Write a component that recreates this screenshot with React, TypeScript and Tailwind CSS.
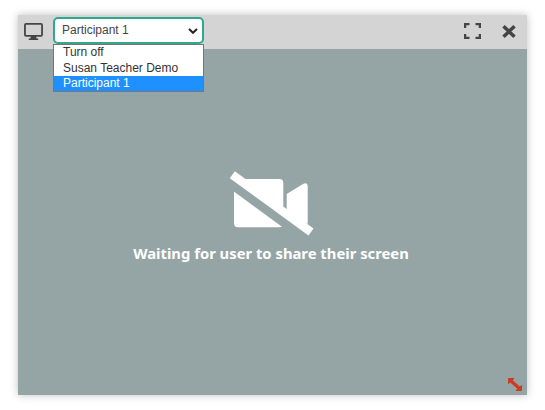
export default function App() {
  return (
    <div className="h-[410px] w-[545px] overflow-hidden bg-white pl-[18px] pt-[15px] font-['Liberation_Sans',Arial,sans-serif]">
      <div className="flex h-[380px] w-[509px] flex-col bg-[#95a5a6] shadow-[0_0_8px_rgba(0,0,0,0.25)]">
        <div className="relative flex h-[34px] shrink-0 items-center bg-[#d4d4d4] pl-[6px] pr-[11px]">
          <svg width="19" height="17" viewBox="0 0 20 18" className="-mt-[2px] mr-[10px] shrink-0 text-[#444]">
            <path fill="currentColor" fillRule="evenodd" d="M2 0h16a2 2 0 0 1 2 2v10.500a2 2 0 0 1-2 2h-5.200l.5 1.800H15v1.700H5v-1.700h1.700l.5-1.800H2a2 2 0 0 1-2-2V2a2 2 0 0 1 2-2Zm-.100 1.900v10.700h16.200V1.900H1.900Z" />
          </svg>
          <div className="relative -mt-[4px]">
            <select
              defaultValue="Participant 1"
              className="block h-[27px] w-[151px] appearance-none rounded-[5px] border-2 border-[#2fa98c] bg-white pl-[7px] pr-[2px] text-[12px] text-[#444]"
            >
              <option>Turn off</option>
              <option>Susan Teacher Demo</option>
              <option>Participant 1</option>
            </select>
            <svg width="10" height="6" viewBox="0 0 10 6" fill="none" stroke="#222" strokeWidth="2" className="pointer-events-none absolute left-[135px] top-[11px]">
              <path d="M1 1L5 4.800L9 1" />
            </svg>
            <div className="absolute left-0 top-[27px] z-10 w-[151px] border border-[#767676] bg-white text-[12px] text-[#333]">
              <div className="h-[15px] pl-[9px] leading-[15px]">Turn off</div>
              <div className="h-[16px] pl-[9px] leading-[16px]">Susan Teacher Demo</div>
              <div className="h-[15px] bg-[#1e90ff] pl-[9px] leading-[15px] text-white">Participant 1</div>
            </div>
          </div>
          <div className="-mt-[2px] ml-auto flex items-center gap-[21px]">
            <svg width="17" height="16" viewBox="0 0 17 16" fill="none" stroke="#444" strokeWidth="2.300">
              <path d="M1.100 5V1.100H5.500M11.500 1.100H15.900V5M15.900 11V14.900H11.500M5.500 14.900H1.100V11" />
            </svg>
            <svg width="14" height="13" viewBox="0 0 14 13" fill="none" stroke="#444" strokeWidth="3.500">
              <path d="M1.500 1.300L12.500 11.700M12.500 1.300L1.500 11.700" />
            </svg>
          </div>
        </div>
        <div className="relative flex flex-1 flex-col items-center justify-center pb-[17px] pr-[3px]">
          <svg width="90" height="75" viewBox="0 0 90 75" className="mr-[2px] block">
            <rect x="9" y="15" width="49.300" height="48.300" rx="4" fill="#fff" />
            <path fill="#fff" d="M61.700 30 78 20q4.700-2.500 4.700 3V60L61.700 50Z" />
            <path fill="#95a5a6" d="M0 5 0 21 60 65 70 55 9 10Z" />
            <path d="M7.300 10.700 86 68" stroke="#fff" strokeWidth="8.500" />
          </svg>
          <div className="mt-[3px] font-['Noto_Sans',sans-serif] text-[14.8px] font-bold leading-[22px] text-white">
            Waiting for user to share their screen
          </div>
          <svg width="14" height="13" viewBox="0 0 14 13" className="absolute bottom-[4px] right-[5px]" fill="#cc3a20" stroke="#cc3a20">
            <path d="M0.500 0.500H6L0.500 5.500Z" />
            <path d="M13.500 12.500H8L13.500 7.500Z" />
            <path d="M3 3 11 10" strokeWidth="3.400" />
          </svg>
        </div>
      </div>
    </div>
  );
}
